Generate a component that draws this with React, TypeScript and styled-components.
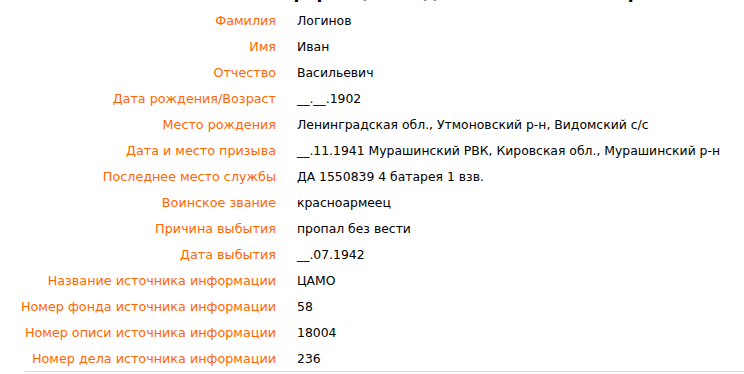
import styled, { createGlobalStyle } from "styled-components";

const GlobalStyle = createGlobalStyle`
  html, body {
    margin: 0;
    padding: 0;
    background: #fff;
  }
  body {
    font-family: "DejaVu Sans", Verdana, sans-serif;
  }
`;

const Page = styled.div`
  width: 744px;
  height: 374px;
  overflow: hidden;
`;

const TitleClip = styled.div`
  height: 7px;
  overflow: hidden;
  display: flex;
  align-items: flex-end;
  padding-left: 262px;
`;

const Title = styled.h1`
  margin: 0 0 5px;
  font-family: "DejaVu Sans", Verdana, sans-serif;
  font-size: 17px;
  line-height: 20px;
  font-weight: bold;
  white-space: nowrap;
  color: #000;
`;

const TableFrame = styled.div`
  margin-left: 25px;
  border-bottom: 1px solid #dcdcdc;
`;

const InfoTable = styled.table`
  border-collapse: collapse;
  table-layout: fixed;
  margin-left: -5px;
  width: 724px;
`;

const Row = styled.tr`
  height: 26px;
`;

const Label = styled.td`
  width: 256px;
  padding: 1px 10px 0 0;
  text-align: right;
  vertical-align: middle;
  color: #ff6600;
  font-size: 12.75px;
  line-height: 25px;
  white-space: nowrap;
`;

const Value = styled.td`
  padding: 1px 0 0 11px;
  vertical-align: middle;
  color: #000;
  font-size: 12.4px;
  line-height: 25px;
  white-space: nowrap;
`;

const rows: [string, string][] = [
  ["Фамилия", "Логинов"],
  ["Имя", "Иван"],
  ["Отчество", "Васильевич"],
  ["Дата рождения/Возраст", "__.__.1902"],
  ["Место рождения", "Ленинградская обл., Утмоновский р-н, Видомский с/с"],
  ["Дата и место призыва", "__.11.1941 Мурашинский РВК, Кировская обл., Мурашинский р-н"],
  ["Последнее место службы", "ДА 1550839 4 батарея 1 взв."],
  ["Воинское звание", "красноармеец"],
  ["Причина выбытия", "пропал без вести"],
  ["Дата выбытия", "__.07.1942"],
  ["Название источника информации", "ЦАМО"],
  ["Номер фонда источника информации", "58"],
  ["Номер описи источника информации", "18004"],
  ["Номер дела источника информации", "236"],
];

export default function App() {
  return (
    <Page>
      <GlobalStyle />
      <TitleClip>
        <Title>Информация из донесения о безвозвратных потерях</Title>
      </TitleClip>
      <TableFrame>
        <InfoTable>
          <tbody>
            {rows.map(([label, value]) => (
              <Row key={label}>
                <Label>{label}</Label>
                <Value>{value}</Value>
              </Row>
            ))}
          </tbody>
        </InfoTable>
      </TableFrame>
    </Page>
  );
}
